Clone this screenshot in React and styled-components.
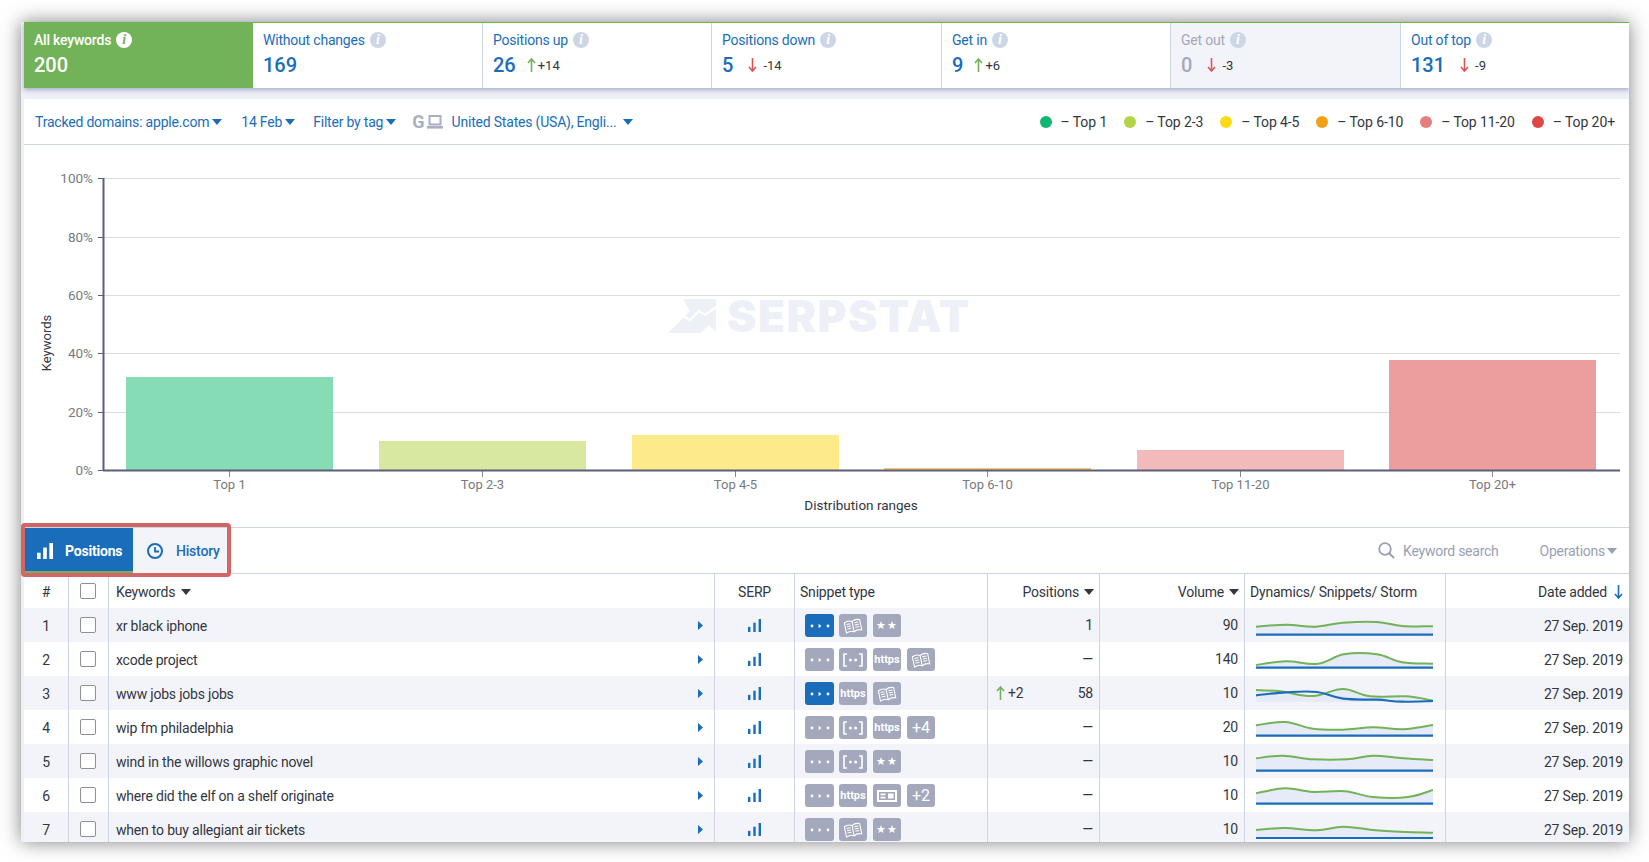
import React from 'react';
import styled, { createGlobalStyle } from 'styled-components';

const blue = '#1a6dbb';
const line = '#cdd5e5';
const text = '#33363f';
const chipGrey = '#a3a8bd';

const Global = createGlobalStyle`
  html, body { margin: 0; padding: 0; background: #fff; width: 1649px; height: 862px; overflow: hidden; }
  body { font-family: Roboto, "Liberation Sans", sans-serif; color: ${text}; font-size: 14px; }
`;

const Panel = styled.div`
  margin: 22px 20px 0 21px;
  height: 820px;
  padding-left: 3px;
  background: #eef0f8;
  box-shadow: 0 0 18px rgba(0, 0, 0, 0.5);
  overflow: hidden;
  box-sizing: border-box;
`;

const StatBar = styled.div`
  display: grid;
  grid-template-columns: 229px 230px 229px 230px 229px 230px 228px;
  height: 66px;
  border-top: 1px solid #6fb254;
  box-sizing: border-box;
  background: #fff;
  box-shadow: 0 2px 5px rgba(80, 90, 130, 0.45);
  position: relative;
`;

const Tile = styled.div`
  box-sizing: border-box;
  padding: 7px 0 0 10px;
  background: ${p => (p.$state === 'active' ? '#72b259' : p.$state === 'muted' ? '#f3f4f9' : '#fff')};
  border-right: ${p => (p.$state === 'active' || p.$last ? '0' : `1px solid ${line}`)};
`;

const TileLabel = styled.div`
  display: flex;
  align-items: center;
  gap: 5px;
  height: 20px;
  font-size: 14px;
  font-weight: ${p => (p.$state === 'active' ? 500 : 400)};
  letter-spacing: -0.2px;
  color: ${p => (p.$state === 'active' ? '#fff' : p.$state === 'muted' ? chipGrey : blue)};
`;

const Info = styled.span`
  width: 16px;
  height: 16px;
  border-radius: 50%;
  display: inline-flex;
  align-items: center;
  justify-content: center;
  background: ${p => (p.$state === 'active' ? '#fff' : '#cdd6e6')};
  color: ${p => (p.$state === 'active' ? '#72b259' : '#fff')};
  font: italic 700 14px "Liberation Serif", serif;
`;

const TileValue = styled.div`
  display: flex;
  align-items: center;
  height: 26px;
  margin-top: 2px;
  font-size: 20px;
  font-weight: 500;
  color: ${p => (p.$state === 'active' ? '#fff' : p.$state === 'muted' ? chipGrey : blue)};
`;

const Delta = styled.span`
  display: inline-flex;
  align-items: center;
  margin-left: ${p => (p.$down ? 15 : 11)}px;
  gap: ${p => (p.$down ? 6 : 2)}px;
  font-size: 13px;
  font-weight: 400;
  color: ${text};
`;

const Card = styled.div`
  margin-top: 11px;
  background: #fff;
`;

const FilterRow = styled.div`
  display: flex;
  align-items: center;
  height: 46px;
  box-sizing: border-box;
  padding: 0 14px 0 11px;
  border-bottom: 1px solid ${line};
`;

const FilterLink = styled.span`
  display: inline-flex;
  align-items: center;
  color: ${blue};
  font-size: 14px;
  letter-spacing: -0.2px;
  margin-right: ${p => p.$gap || 0}px;
`;

const Caret = styled.i`
  display: inline-block;
  width: 0;
  height: 0;
  border-left: 5px solid transparent;
  border-right: 5px solid transparent;
  border-top: 6px solid ${p => p.$color || blue};
  margin-left: ${p => p.$ml ?? 3}px;
`;

const GMark = styled.span`
  color: #a9aec1;
  font-size: 18px;
  font-weight: 700;
  margin-right: 2px;
`;

const Legend = styled.div`
  display: flex;
  align-items: center;
  margin-left: auto;
  gap: 17px;
`;

const LegendItem = styled.span`
  display: inline-flex;
  align-items: center;
  gap: 9px;
  font-size: 14px;
  letter-spacing: -0.1px;
  color: ${text};
`;

const Dot = styled.i`
  width: 12px;
  height: 12px;
  border-radius: 50%;
  background: ${p => p.$color};
`;

const ChartBox = styled.div`
  height: 382px;
  svg { display: block; }
`;

const TabRow = styled.div`
  position: relative;
  display: flex;
  align-items: center;
  height: 47px;
  box-sizing: border-box;
  border-top: 1px solid ${line};
  border-bottom: 1px solid ${line};
  padding-right: 12px;
`;

const Tabs = styled.div`
  display: flex;
  height: 100%;
`;

const Tab = styled.div`
  display: flex;
  align-items: center;
  box-sizing: border-box;
  width: ${p => p.$w}px;
  padding: ${p => (p.$on ? 2 : 0)}px 0 0 ${p => p.$pl}px;
  gap: ${p => p.$gap}px;
  font-size: 14px;
  font-weight: ${p => (p.$on ? 700 : 500)};
  letter-spacing: -0.2px;
  color: ${p => (p.$on ? '#fff' : blue)};
  background: ${p => (p.$on ? blue : '#f3f4f9')};
  border-bottom: ${p => (p.$on ? '2px solid #72b259' : '0')};
`;

const Highlight = styled.div`
  position: absolute;
  left: -3px;
  top: -5px;
  width: 210px;
  height: 54px;
  box-sizing: border-box;
  border: 4px solid #d46565;
  border-radius: 4px;
  pointer-events: none;
`;

const Tools = styled.div`
  margin-left: auto;
  display: flex;
  align-items: center;
  color: #9a9fb3;
  font-size: 14px;
  letter-spacing: -0.25px;
`;

const Search = styled.span`
  display: inline-flex;
  align-items: center;
  gap: 8px;
  margin-right: 41px;
`;

const Row = styled.div`
  display: grid;
  grid-template-columns: 45px 40px 606px 80px 193px 112px 145px 201px 183px;
  height: 34px;
  background: ${p => (p.$alt ? '#f3f4f9' : '#fff')};
`;

const Cell = styled.div`
  display: flex;
  align-items: center;
  box-sizing: border-box;
  min-width: 0;
  padding: ${p => p.$pt ?? 2}px ${p => p.$pr ?? 6}px 0 ${p => p.$pl ?? 6}px;
  justify-content: ${p => p.$align || 'flex-start'};
  border-right: ${p => (p.$line ? `1px solid ${line}` : '0')};
  font-size: 14px;
  letter-spacing: -0.2px;
  color: ${text};
`;

const Box = styled.i`
  width: 14px;
  height: 14px;
  margin-left: -1px;
  background: #fff;
  border: 1px solid #8d8f96;
  border-radius: 2px;
`;

const Chips = styled.div`
  display: flex;
  gap: 6px;
`;

const Chip = styled.span`
  display: inline-flex;
  align-items: center;
  justify-content: center;
  width: 28px;
  height: 23px;
  border-radius: 3px;
  color: #fff;
  background: ${p => (p.$on ? blue : chipGrey)};
  font-size: ${p => p.$fs || 11}px;
  font-weight: ${p => p.$fw || 700};
  letter-spacing: ${p => p.$ls || 0}px;
  white-space: nowrap;
  &:first-child { width: 29px; margin-right: -1px; }
`;

const Move = styled.span`
  display: inline-flex;
  align-items: center;
  gap: 3px;
  margin-right: auto;
`;

const DateArrow = styled.span`
  display: inline-flex;
  margin-left: 7px;
`;

const Tri = () => (
  <svg width="5" height="9" viewBox="0 0 5 9" style={{ marginLeft: 'auto', marginTop: -2 }}><path d="M0 0 L5 4.5 L0 9Z" fill={blue} /></svg>
);

const Bars = ({ c = blue, w = 13, h = 13, bw = 2.6 }) => (
  <svg width={w} height={h} viewBox="0 0 14 14">
    <rect x="0" y="8.5" width={bw} height="5.5" fill={c} />
    <rect x={7 - bw / 2} y="4" width={bw} height="10" fill={c} />
    <rect x={14 - bw} y="0" width={bw} height="14" fill={c} />
  </svg>
);

const Arrow = ({ dir, c, h = 14 }) => (
  <svg width="9" height={h} viewBox={`0 0 9 ${h}`}>
    {dir === 'up'
      ? <path d={`M4.5 ${h} V1.5 M1 5 L4.5 1 L8 5`} stroke={c} strokeWidth="1.6" fill="none" />
      : <path d={`M4.5 0 V${h - 1.5} M1 ${h - 5} L4.5 ${h - 1} L8 ${h - 5}`} stroke={c} strokeWidth="1.6" fill="none" />}
  </svg>
);

const Dots = () => (
  <svg width="20" height="6" viewBox="0 0 20 6"><circle cx="2" cy="3" r="1.4" fill="#fff" /><path d="M8.6 .8 L11.4 3 L8.6 5.2Z" fill="#fff" /><circle cx="18" cy="3" r="1.4" fill="#fff" /></svg>
);
const Bracket = () => (
  <svg width="20" height="14" viewBox="0 0 20 14"><path d="M4 1 H1 V13 H4 M16 1 H19 V13 H16" stroke="#fff" strokeWidth="1.6" fill="none" /><circle cx="7.4" cy="7" r="1.5" fill="#fff" /><circle cx="12.6" cy="7" r="1.5" fill="#fff" /></svg>
);
const Book = () => (
  <svg width="18" height="16" viewBox="0 0 18 16" style={{ transform: 'rotate(-12deg)' }}>
    <path d="M9 3.5 C7 2 4 2 1.2 3 V13.5 C4 12.5 7 12.5 9 14 C11 12.5 14 12.5 16.8 13.5 V3 C14 2 11 2 9 3.5 Z M9 3.5 V14" fill="none" stroke="#fff" strokeWidth="1.1" />
    <path d="M3 5.2 H7 M3 7.5 H7 M3 9.8 H7 M11 5.2 H15 M11 7.5 H15 M11 9.8 H15" stroke="#fff" strokeWidth="1" />
  </svg>
);
const Card2 = () => (
  <svg width="20" height="12" viewBox="0 0 20 12"><path fillRule="evenodd" d="M0 0H20V12H0Z M2 2V10H18V2Z" fill="#fff" /><rect x="3.5" y="3.5" width="5" height="1.8" fill="#fff" /><rect x="3.5" y="6.7" width="5" height="1.8" fill="#fff" /><rect x="11" y="3.5" width="5.5" height="5" fill="#fff" /></svg>
);

const chipMap = {
  dots: <Chip><Dots /></Chip>,
  on: <Chip $on><Dots /></Chip>,
  book: <Chip><Book /></Chip>,
  star: <Chip $fs={11} $fw={400} $ls={1}>★★</Chip>,
  br: <Chip><Bracket /></Chip>,
  https: <Chip>https</Chip>,
  card: <Chip><Card2 /></Chip>,
  p4: <Chip $fs={16} $fw={400}>+4</Chip>,
  p2: <Chip $fs={16} $fw={400}>+2</Chip>,
};

const smooth = pts => {
  let d = `M${pts[0][0]} ${pts[0][1]}`;
  for (let i = 0; i < pts.length - 1; i++) {
    const a = pts[i - 1] || pts[i], b = pts[i], c = pts[i + 1], e = pts[i + 2] || c;
    const k = 0.18;
    d += ` C${(b[0] + (c[0] - a[0]) * k).toFixed(1)} ${(b[1] + (c[1] - a[1]) * k).toFixed(1)} ${(c[0] - (e[0] - b[0]) * k).toFixed(1)} ${(c[1] - (e[1] - b[1]) * k).toFixed(1)} ${c[0]} ${c[1]}`;
  }
  return d;
};

const Spark = ({ green, blueLine, base }) => {
  const g = smooth(green);
  const b = blueLine ? smooth(blueLine) : `M0 ${base} H177`;
  const bottom = blueLine ? 26 : base;
  return (
    <svg width="177" height="34" viewBox="0 0 177 34" style={{ display: 'block' }}>
      <path d={`${g} V${bottom} H0 Z`} fill="#e6ebf7" />
      <path d={g} fill="none" stroke="#72b259" strokeWidth="2" />
      <path d={b} fill="none" stroke={blue} strokeWidth="2.2" />
    </svg>
  );
};

const rows = [
  { n: 1, k: 'xr black iphone', c: ['on', 'book', 'star'], p: '1', v: '90', base: 26.7, g: [[0, 18.7], [30, 16.7], [59, 18.7], [87, 14.7], [121, 14], [146, 18], [177, 18.3]] },
  { n: 2, k: 'xcode project', c: ['dots', 'br', 'https', 'book'], p: '—', v: '140', base: 25.7, g: [[0, 23], [30, 19.3], [62, 21.7], [88, 12.3], [121, 12.3], [146, 20.3], [177, 21.7]] },
  { n: 3, k: 'www jobs jobs jobs', c: ['on', 'https', 'book'], p: '58', up: '+2', v: '10', g: [[0, 14], [24, 15.3], [57, 20], [87, 13], [114, 20.3], [151, 20.3], [177, 24.7]], b: [[0, 19.3], [30, 16.3], [61, 16], [87, 22.7], [121, 23.7], [146, 25.7], [177, 25]] },
  { n: 4, k: 'wip fm philadelphia', c: ['dots', 'br', 'https', 'p4'], p: '—', v: '20', base: 25.7, g: [[0, 15.3], [29, 12], [57, 18.7], [87, 19.7], [117, 17.3], [147, 19.3], [177, 15]] },
  { n: 5, k: 'wind in the willows graphic novel', c: ['dots', 'br', 'star'], p: '—', v: '10', base: 26.7, g: [[0, 14.3], [27, 11.7], [57, 15.3], [91, 15.3], [117, 11.7], [147, 14.3], [177, 16]] },
  { n: 6, k: 'where did the elf on a shelf originate', c: ['dots', 'https', 'card', 'p2'], p: '—', v: '10', base: 25.7, g: [[0, 15.3], [29, 10.3], [57, 14], [89, 13.3], [117, 19], [152, 19], [177, 12]] },
  { n: 7, k: 'when to buy allegiant air tickets', c: ['dots', 'book', 'star'], p: '—', v: '10', base: 26, g: [[0, 18], [29, 16], [61, 18.3], [87, 14.7], [117, 18], [151, 20], [177, 20.7]] },
];

const stats = [
  { l: 'All keywords', v: '200', s: 'active' },
  { l: 'Without changes', v: '169' },
  { l: 'Positions up', v: '26', dir: 'up', d: '+14' },
  { l: 'Positions down', v: '5', dir: 'down', d: '-14' },
  { l: 'Get in', v: '9', dir: 'up', d: '+6' },
  { l: 'Get out', v: '0', dir: 'down', d: '-3', s: 'muted' },
  { l: 'Out of top', v: '131', dir: 'down', d: '-9' },
];

const legend = [
  ['#0fb871', 'Top 1'], ['#b2d445', 'Top 2-3'], ['#fedb14', 'Top 4-5'], ['#f2a116', 'Top 6-10'], ['#e87d7d', 'Top 11-20'], ['#df4747', 'Top 20+'],
];

const barsData = [
  ['Top 1', 102, '#86dcb4', 232],
  ['Top 2-3', 355, '#d9e8a0', 296],
  ['Top 4-5', 608, '#fdea8b', 290],
  ['Top 6-10', 860, '#f4c27a', 323],
  ['Top 11-20', 1113, '#f2baba', 305],
  ['Top 20+', 1365, '#ec9e9e', 215],
];

const labelFont = { fontFamily: 'Roboto, sans-serif', fontSize: 13, fill: '#777a80' };

const Chart = () => {
  const ys = [[33, '100%'], [92, '80%'], [150, '60%'], [208, '40%'], [267, '20%'], [325, '0%']];
  return (
    <svg width="1605" height="382" viewBox="0 0 1605 382">
      {ys.slice(0, 5).map(([y]) => <line key={y} x1="80" x2="1596" y1={y + 0.5} y2={y + 0.5} stroke="#dadbdd" strokeWidth="1.2" />)}
      {ys.map(([y, t]) => (
        <g key={t}>
          <line x1="74" x2="80" y1={y + 0.5} y2={y + 0.5} stroke="#5b6078" />
          <text x="69" y={y + 5} textAnchor="end" style={{ ...labelFont, fontSize: 13.5 }}>{t}</text>
        </g>
      ))}
      <g fill="#eef0f7">
        <path d="M644 188 L666 166 L659 154 L692 154 L692 187 L685 180 L676 188 Z" />
        <path d="M652 177 L659 171 L666 175 L675 166 L681 170 L692 162" stroke="#fff" strokeWidth="2.2" fill="none" />
        <text x="703" y="187" style={{ fontFamily: 'Inter, Roboto, sans-serif', fontSize: 44, fontWeight: 900, letterSpacing: 1.6 }}>SERPSTAT</text>
      </g>
      {barsData.map(([t, x, c, y]) => (
        <g key={t}>
          <rect x={x} y={y} width="207" height={325 - y} fill={c} />
          <line x1={x + 103.5} x2={x + 103.5} y1="326" y2="332" stroke="#888" />
          <text x={x + 103.5} y="344" textAnchor="middle" style={labelFont}>{t}</text>
        </g>
      ))}
      <line x1="79.5" x2="79.5" y1="33" y2="326" stroke="#5b6078" strokeWidth="2" />
      <line x1="79" x2="1596" y1="325.5" y2="325.5" stroke="#5b6078" strokeWidth="2" />
      <text x="837" y="365" textAnchor="middle" style={{ ...labelFont, fontSize: 13.5, fill: '#33363f' }}>Distribution ranges</text>
      <text transform="translate(27 198) rotate(-90)" textAnchor="middle" style={{ ...labelFont, fill: '#33363f' }}>Keywords</text>
    </svg>
  );
};

export default function App() {
  return (
    <>
      <Global />
      <Panel>
        <StatBar>
          {stats.map((s, i) => (
            <Tile key={s.l} $state={s.s} $last={i === 6}>
              <TileLabel $state={s.s}>{s.l}<Info $state={s.s}>i</Info></TileLabel>
              <TileValue $state={s.s}>
                {s.v}
                {s.d && (
                  <Delta $down={s.dir === 'down'}>
                    <Arrow dir={s.dir} c={s.dir === 'up' ? '#72b259' : '#d9555a'} />
                    {s.d}
                  </Delta>
                )}
              </TileValue>
            </Tile>
          ))}
        </StatBar>
        <Card>
          <FilterRow>
            <FilterLink $gap={19}>Tracked domains: apple.com<Caret /></FilterLink>
            <FilterLink $gap={18}>14 Feb<Caret /></FilterLink>
            <FilterLink $gap={16}>Filter by tag<Caret /></FilterLink>
            <GMark>G</GMark>
            <svg width="16" height="14" viewBox="0 0 16 14" style={{ marginRight: 9 }}>
              <path fillRule="evenodd" d="M1.5 0H14.5V10.5H1.5Z M3.5 2V8.5H12.5V2Z" fill="#a9aec1" />
              <rect x="0" y="11" width="16" height="2.6" fill="#a9aec1" />
            </svg>
            <FilterLink>United States (USA), Engli...<Caret $ml={7} /></FilterLink>
            <Legend>
              {legend.map(([c, t]) => (
                <LegendItem key={t}><Dot $color={c} />– {t}</LegendItem>
              ))}
            </Legend>
          </FilterRow>
          <ChartBox><Chart /></ChartBox>
          <TabRow>
            <Tabs>
              <Tab $on $w={109} $pl={13} $gap={12}><Bars c="#fff" w={16} h={16} bw={3.2} />Positions</Tab>
              <Tab $w={94} $pl={14} $gap={13}>
                <svg width="16" height="16" viewBox="0 0 16 16"><circle cx="8" cy="8" r="7" fill="none" stroke={blue} strokeWidth="2" /><path d="M8 4 V8.5 H12" fill="none" stroke={blue} strokeWidth="1.8" /></svg>
                History
              </Tab>
            </Tabs>
            <Highlight />
            <Tools>
              <Search>
                <svg width="17" height="17" viewBox="0 0 17 17"><circle cx="7" cy="7" r="5.8" fill="none" stroke="#9aa0b5" strokeWidth="1.8" /><path d="M11.2 11.2 L16 16" stroke="#9aa0b5" strokeWidth="2" /></svg>
                Keyword search
              </Search>
              Operations<Caret $color="#9a9fb3" $ml={2} />
            </Tools>
          </TabRow>
          <Row>
            <Cell $line $align="center" $pt={1}>#</Cell>
            <Cell $line $align="center" $pt={0}><Box /></Cell>
            <Cell $line $pl={7} $pt={1}>Keywords<Caret $color={text} $ml={6} /></Cell>
            <Cell $line $align="center" $pt={1}>SERP</Cell>
            <Cell $line $pl={5} $pt={1}>Snippet type</Cell>
            <Cell $line $align="flex-end" $pr={5} $pt={1}>Positions<Caret $color={text} $ml={5} /></Cell>
            <Cell $line $align="flex-end" $pr={5} $pt={1}>Volume<Caret $color={text} $ml={5} /></Cell>
            <Cell $line $pl={5} $pt={1}>Dynamics/ Snippets/ Storm</Cell>
            <Cell $align="flex-end" $pt={1}>Date added<DateArrow><Arrow dir="down" c={blue} /></DateArrow></Cell>
          </Row>
          {rows.map((r, i) => (
            <Row key={r.n} $alt={i % 2 === 0}>
              <Cell $line $align="center" $pt={1}>{r.n}</Cell>
              <Cell $line $align="center" $pt={0}><Box /></Cell>
              <Cell $line $pl={7} $pr={11}>{r.k}<Tri /></Cell>
              <Cell $line $align="center" $pt={1}><Bars /></Cell>
              <Cell $line $pl={10} $pt={1}><Chips>{r.c.map((c, j) => <React.Fragment key={j}>{chipMap[c]}</React.Fragment>)}</Chips></Cell>
              <Cell $line $align="flex-end" $pl={8} $pt={0}>
                {r.up && <Move><Arrow dir="up" c="#72b259" />{r.up}</Move>}
                {r.p}
              </Cell>
              <Cell $line $align="flex-end" $pt={0}>{r.v}</Cell>
              <Cell $line $pl={11} $pr={0} $pt={0}><Spark green={r.g} blueLine={r.b} base={r.base} /></Cell>
              <Cell $align="flex-end" $pt={1}>27 Sep. 2019</Cell>
            </Row>
          ))}
        </Card>
      </Panel>
    </>
  );
}
